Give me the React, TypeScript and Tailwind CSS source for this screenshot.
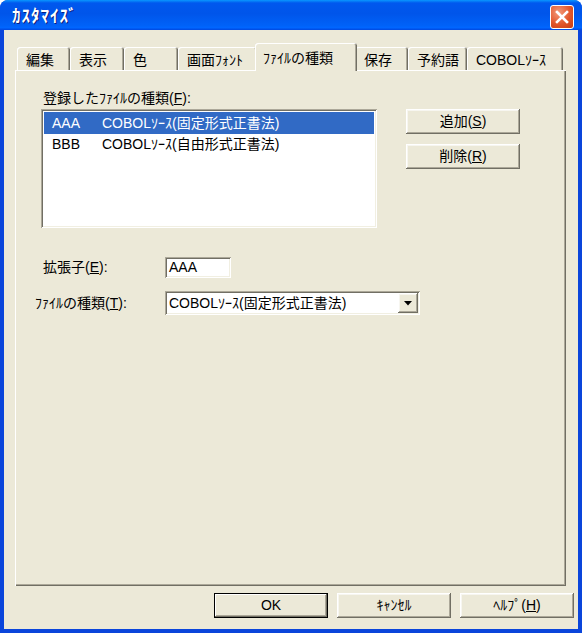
import React from "react";

const FONT = '"Liberation Sans", "Noto Sans CJK JP", sans-serif';

const raised =
  "shadow-[inset_-1px_-1px_#716F64,inset_1px_1px_#ffffff,inset_-2px_-2px_#ACA899,inset_2px_2px_#F7F6F0]";
const sunken =
  "shadow-[inset_1px_1px_#ACA899,inset_-1px_-1px_#ffffff,inset_2px_2px_#716F64,inset_-2px_-2px_#F1EFE2]";

function Tab({ label, w, selected }: { label: string; w: string; selected?: boolean }) {
  if (selected) {
    return (
      <div
        className={`${w} h-[28px] -mb-[1px] -mx-[2px] relative z-10 bg-[#ECE9D8] rounded-t-[3px] pl-[8px] pt-[3px] flex items-center text-[14px] text-black shadow-[inset_1px_1px_#ffffff,inset_-1px_0_#716F64,inset_-2px_0_#ACA899]`}
      >
        {label}
      </div>
    );
  }
  return (
    <div
      className={`${w} h-[23px] bg-[#ECE9D8] rounded-t-[3px] pl-[9px] pt-[4px] flex items-center text-[14px] text-black shadow-[inset_1px_1px_#ffffff,inset_-1px_0_#716F64,inset_-2px_0_#ACA899]`}
    >
      {label}
    </div>
  );
}

function Btn({ children, def }: { children: React.ReactNode; def?: boolean }) {
  return (
    <div
      className={`w-[114px] h-[25px] flex items-center justify-center text-[14px] text-black bg-[#ECE9D8] ${
        def
          ? "shadow-[inset_0_0_0_1px_#000000,inset_-2px_-2px_#716F64,inset_2px_2px_#ffffff,inset_-3px_-3px_#ACA899]"
          : raised
      }`}
    >
      {children}
    </div>
  );
}

export default function App() {
  return (
    <div className="w-[585px] h-[635px] bg-white" style={{ fontFamily: FONT }}>
      <div className="w-[582px] h-[633px] flex flex-col rounded-t-[8px] overflow-hidden bg-[#0A45DB]">
        {/* Title bar */}
        <div className="h-[30px] shrink-0 flex items-center justify-between pl-[12px] pr-[8px] bg-[linear-gradient(180deg,#0997FF_0%,#0058EE_10%,#0055EA_45%,#0062F8_85%,#0066FF_92%,#0048E0_100%)]">
          <span className="text-white font-bold text-[17px] tracking-[1px] [text-shadow:1px_1px_#0A1F80] mt-[3px]">
            ｶｽﾀﾏｲｽﾞ
          </span>
          <div className="w-[24px] h-[24px] mt-[4px] rounded-[3px] border border-white bg-[radial-gradient(circle_at_35%_30%,#F29B7C_0%,#E2562B_55%,#C83C12_100%)] flex items-center justify-center">
            <svg width="14" height="14" viewBox="0 0 14 14">
              <path d="M2 2 L12 12 M12 2 L2 12" stroke="white" strokeWidth="2.6" strokeLinecap="square" />
            </svg>
          </div>
        </div>

        {/* Client area */}
        <div className="flex-1 mx-[4px] mb-[4px] bg-[#ECE9D8] flex flex-col px-[11px] pt-[13px]">
          {/* Tabs */}
          <div className="h-[27px] flex items-end pl-[2px]">
            <Tab label="編集" w="w-[53px]" />
            <Tab label="表示" w="w-[54px]" />
            <Tab label="色" w="w-[54px]" />
            <Tab label="画面ﾌｫﾝﾄ" w="w-[79px]" />
            <Tab label="ﾌｧｲﾙの種類" w="w-[102px]" selected />
            <Tab label="保存" w="w-[53px]" />
            <Tab label="予約語" w="w-[59px]" />
            <Tab label="COBOLｿｰｽ" w="w-[96px]" />
          </div>

          {/* Panel */}
          <div className="w-[551px] h-[516px] bg-[#ECE9D8] shadow-[inset_1px_1px_#ffffff,inset_-1px_-1px_#716F64,inset_-2px_-2px_#ACA899] pl-[26px] pt-[18px] text-[14px] text-black">
            <div className="flex">
              <div className="w-[336px] flex flex-col">
                <div className="h-[20px] pl-[2px] flex items-center">登録したﾌｧｲﾙの種類(<u>F</u>):</div>
                <div className={`mt-[1px] h-[119px] bg-white ${sunken} p-[3px]`}>
                  <div className="h-[22px] bg-[#316AC5] text-white flex items-center">
                    <span className="w-[58px] pl-[8px]">AAA</span>
                    <span>COBOLｿｰｽ(固定形式正書法)</span>
                  </div>
                  <div className="h-[21px] flex items-center">
                    <span className="w-[58px] pl-[8px]">BBB</span>
                    <span>COBOLｿｰｽ(自由形式正書法)</span>
                  </div>
                </div>
              </div>
              <div className="ml-[29px] mt-[21px] flex flex-col gap-[10px]">
                <Btn>
                  <span>
                    追加(<u>S</u>)
                  </span>
                </Btn>
                <Btn>
                  <span>
                    削除(<u>R</u>)
                  </span>
                </Btn>
              </div>
            </div>

            <div className="mt-[29px] flex items-center">
              <div className="w-[124px] pl-[2px]">
                拡張子(<u>E</u>):
              </div>
              <div className={`w-[66px] h-[21px] bg-white ${sunken} flex items-center pl-[4px]`}>AAA</div>
            </div>

            <div className="mt-[13px] flex items-center">
              <div className="w-[130px] -ml-[6px]">
                ﾌｧｲﾙの種類(<u>T</u>):
              </div>
              <div className={`w-[255px] h-[24px] bg-white ${sunken} flex items-center justify-between pl-[4px] pr-[2px]`}>
                <span>COBOLｿｰｽ(固定形式正書法)</span>
                <div className={`w-[20px] h-[20px] bg-[#ECE9D8] ${raised} flex items-center justify-center`}>
                  <svg width="8" height="5" viewBox="0 0 8 5">
                    <path d="M0 0 H8 L4 4.5 Z" fill="black" />
                  </svg>
                </div>
              </div>
            </div>
          </div>

          {/* Bottom buttons */}
          <div className="mt-[7px] flex justify-end gap-[9px] -mr-[7px]">
            <Btn def>OK</Btn>
            <Btn>ｷｬﾝｾﾙ</Btn>
            <Btn>
              <span>
                ﾍﾙﾌﾟ(<u>H</u>)
              </span>
            </Btn>
          </div>
        </div>
      </div>
    </div>
  );
}
